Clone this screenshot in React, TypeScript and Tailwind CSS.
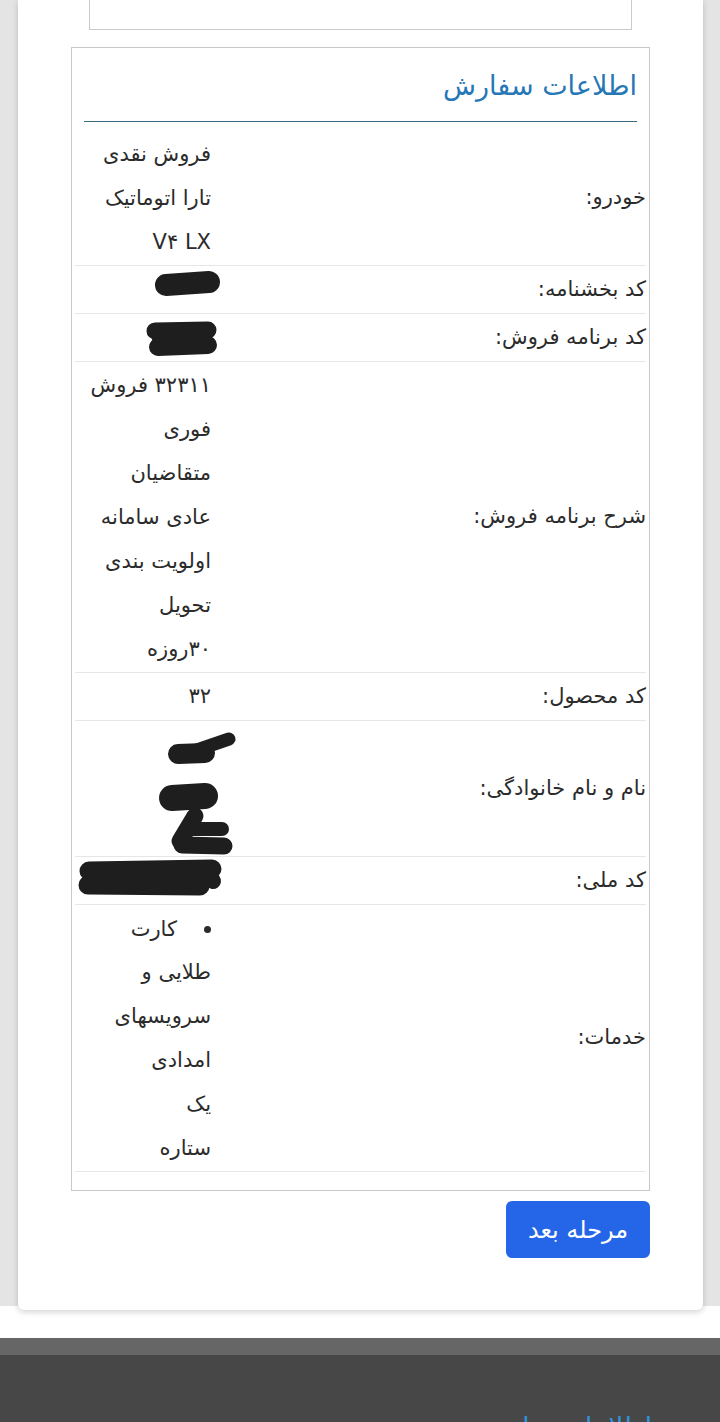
import React from "react";

const FONT = { fontFamily: '"DejaVu Sans", "Noto Sans", sans-serif' };

function Lines({ lines }: { lines: string[] }) {
  return (
    <>
      {lines.map((l, i) => (
        <div key={i} className="h-[44px] leading-[42px] whitespace-nowrap">
          {l}
        </div>
      ))}
    </>
  );
}

function Redact({ children }: { children: React.ReactNode }) {
  return (
    <svg
      className="absolute left-0 top-0 overflow-visible pointer-events-none"
      width="140"
      height="10"
      fill="none"
      stroke="#1e1e1e"
      strokeLinecap="round"
      strokeLinejoin="round"
    >
      {children}
    </svg>
  );
}

function Row({ label, children }: { label: string; children: React.ReactNode }) {
  return (
    <div className="flex min-h-[48px] border-b border-[#e6e6e6]">
      <div className="flex flex-1 items-center justify-start text-[21px] text-[#2b2b2b]">{label}</div>
      <div className="relative w-[140px] shrink-0 pt-[2px] pr-[4px] text-[21px] text-[#2b2b2b]">
        {children}
      </div>
    </div>
  );
}

export default function App() {
  return (
    <div dir="rtl" className="w-[720px] bg-white" style={FONT}>
      <div className="bg-[#e4e4e4] pl-[18px] pr-[17px] h-[1306px]">
        <div className="relative h-[1310px] rounded-b-[6px] bg-white px-[53px] pb-[52px] shadow-[0_2px_6px_rgba(0,0,0,0.18)]">
          {/* top box remnant */}
          <div className="mx-[18px] h-[30px] border-x border-b border-[#cacaca]" />

          {/* order info panel */}
          <div className="mt-[17px] border border-[#c9c9c9] px-[3px] pb-[18px]">
            <div className="px-[9px]">
              <div className="pt-[16px] text-[27px] leading-[44px] text-[#2677b5]">اطلاعات سفارش</div>
              <div className="mt-[13px] h-px bg-[#3a6a82]" />
            </div>
            <div className="mt-[9px]">
              <Row label="خودرو:">
                <Lines lines={["فروش نقدی", "تارا اتوماتیک", "V۴ LX"]} />
              </Row>
              <Row label="کد بخشنامه:">
                <div className="h-[44px]" />
                <Redact>
                  <path d="M91 19 L134 16" strokeWidth="22" />
                </Redact>
              </Row>
              <Row label="کد برنامه فروش:">
                <div className="h-[44px]" />
                <Redact>
                  <path d="M80 17 L133 16" strokeWidth="17" />
                  <path d="M84 25 L130 25" strokeWidth="14" />
                  <path d="M83 33 L133 31" strokeWidth="18" />
                </Redact>
              </Row>
              <Row label="شرح برنامه فروش:">
                <Lines
                  lines={[
                    "۳۲۳۱۱ فروش",
                    "فوری",
                    "متقاضیان",
                    "عادی سامانه",
                    "اولویت بندی",
                    "تحویل",
                    "۳۰روزه",
                  ]}
                />
              </Row>
              <Row label="کد محصول:">
                <Lines lines={["۳۲"]} />
              </Row>
              <Row label="نام و نام خانوادگی:">
                <div className="h-[133px]" />
                <Redact>
                  <path d="M103 33 L130 32" strokeWidth="20" />
                  <path d="M122 29 L154 18" strokeWidth="13" />
                  <path d="M97 77 L130 75" strokeWidth="26" />
                  <path d="M120 95 L105 120" strokeWidth="17" />
                  <path d="M117 108 L147 108" strokeWidth="14" />
                  <path d="M107 124 L149 125" strokeWidth="17" />
                </Redact>
              </Row>
              <Row label="کد ملی:">
                <div className="h-[44px]" />
                <Redact>
                  <path d="M14 14 L137 12" strokeWidth="19" />
                  <path d="M13 28 L125 29" strokeWidth="19" />
                  <path d="M135 20 L138 24" strokeWidth="16" />
                </Redact>
              </Row>
              <Row label="خدمات:">
                <div className="flex h-[44px] items-center whitespace-nowrap">
                  <span className="ml-[27px] inline-block h-[7px] w-[7px] rounded-full bg-[#2b2b2b]" />
                  <span className="leading-[42px]">کارت</span>
                </div>
                <Lines lines={["طلایی و", "سرویسهای", "امدادی", "یک", "ستاره"]} />
              </Row>
            </div>
          </div>

          <div className="mt-[10px] flex justify-start">
            <button className="h-[57px] w-[144px] rounded-[6px] bg-[#2566e8] text-[24px] text-white">
              مرحله بعد
            </button>
          </div>
        </div>
      </div>

      <div className="h-[32px] bg-white" />
      <div className="h-[17px] bg-[#666666]" />
      <div className="h-[67px] overflow-hidden bg-[#474747] pr-[68px] pt-[54px]">
        <div className="text-[26px] leading-[36px] text-[#2f94dc]">اطلاعات تماس</div>
      </div>
    </div>
  );
}
